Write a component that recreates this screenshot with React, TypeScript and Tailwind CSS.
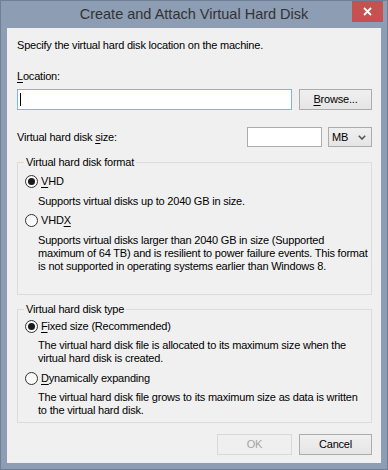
import React from 'react';

const Radio = ({ checked }: { checked: boolean }) => (
  <span className="w-[13px] h-[13px] rounded-full border border-[#333] bg-gradient-to-b from-[#f4f4f4] to-white flex items-center justify-center shrink-0">
    {checked && <span className="w-[7px] h-[7px] rounded-full bg-[#1a1a1a]" />}
  </span>
);

const Btn = ({ children, w, disabled }: { children: React.ReactNode; w: string; disabled?: boolean }) => (
  <div
    className={`${w} h-[21px] flex items-center justify-center border ${
      disabled
        ? 'border-[#d9d9d9] bg-[#efefef] text-[#a3a3a3]'
        : 'border-[#acacac] bg-gradient-to-b from-[#f0f0f0] to-[#e5e5e5] text-black'
    }`}
  >
    {children}
  </div>
);

export default function App() {
  return (
    <div className="w-[388px] h-[470px] bg-[#8d9db3] border border-[#6f7f95] flex flex-col font-['Liberation_Sans',Arial,sans-serif]">
      {/* title bar */}
      <div className="relative h-[27px] shrink-0 flex items-center justify-center text-[14.5px] text-[#333]">
        Create and Attach Virtual Hard Disk
        <div className="absolute top-0 right-[4px] w-[31px] h-[21px] bg-[#c75050] flex items-center justify-center">
          <svg width="9" height="9" viewBox="0 0 9 9">
            <path d="M1 1 L8 8 M8 1 L1 8" stroke="white" strokeWidth="1.8" />
          </svg>
        </div>
      </div>

      {/* client area */}
      <div className="mx-[6px] mb-[6px] flex-1 min-h-0 overflow-hidden bg-[#f0f0f0] pl-[10px] pr-[9px] pt-[11px] flex flex-col text-[11px] leading-[13px] tracking-[-0.2px] text-black">
        <div>Specify the virtual hard disk location on the machine.</div>

        <div className="mt-[18px]">
          <u className="underline-offset-2">L</u>ocation:
        </div>
        <div className="mt-[6px] flex gap-[7px]">
          <div className="w-[275px] h-[21px] bg-white border border-[#7eb4ea] flex items-center pl-[2px]">
            <span className="w-px h-[13px] bg-black" />
          </div>
          <Btn w="w-[73px]">
            <span>
              <u className="underline-offset-2">B</u>rowse...
            </span>
          </Btn>
        </div>

        <div className="mt-[17px] flex items-center h-[20px]">
          <div className="flex-1">
            Virtual hard disk <u className="underline-offset-2">s</u>ize:
          </div>
          <div className="w-[75px] h-[20px] bg-white border border-[#acacac]" />
          <div className="ml-[6px] w-[44px] h-[20px] border border-[#acacac] bg-gradient-to-b from-[#f0f0f0] to-[#e5e5e5] flex items-center pl-[3px] pr-[5px] justify-between">
            <span>MB</span>
            <svg width="8" height="5" viewBox="0 0 8 5">
              <path d="M0.8 0.8 L4 4 L7.2 0.8" fill="none" stroke="#555" strokeWidth="1.6" />
            </svg>
          </div>
        </div>

        {/* format group */}
        <fieldset className="mt-[9px] border border-[#dcdcdc] pl-[7px] pb-[21px]">
          <legend className="ml-[-1px] px-[2px]">Virtual hard disk format</legend>
          <div className="mt-[6px] h-[13px] flex items-center gap-[3px]">
            <Radio checked />
            <span>
              <u className="underline-offset-2">V</u>HD
            </span>
          </div>
          <div className="mt-[7px] ml-[13px]">Supports virtual disks up to 2040 GB in size.</div>
          <div className="mt-[6px] h-[13px] flex items-center gap-[3px]">
            <Radio checked={false} />
            <span>
              VHD<u className="underline-offset-2">X</u>
            </span>
          </div>
          <div className="mt-[7px] ml-[13px] whitespace-nowrap">
            Supports virtual disks larger than 2040 GB in size (Supported
            <br />
            maximum of 64 TB) and is resilient to power failure events. This format
            <br />
            is not supported in operating systems earlier than Windows 8.
          </div>
        </fieldset>

        {/* type group */}
        <fieldset className="mt-[8px] border border-[#dcdcdc] pl-[7px] pb-[5px]">
          <legend className="ml-[-1px] px-[2px]">Virtual hard disk type</legend>
          <div className="mt-[4px] h-[13px] flex items-center gap-[3px]">
            <Radio checked />
            <span>
              <u className="underline-offset-2">F</u>ixed size (Recommended)
            </span>
          </div>
          <div className="mt-[6px] ml-[13px] whitespace-nowrap">
            The virtual hard disk file is allocated to its maximum size when the
            <br />
            virtual hard disk is created.
          </div>
          <div className="mt-[7px] h-[13px] flex items-center gap-[3px]">
            <Radio checked={false} />
            <span>
              <u className="underline-offset-2">D</u>ynamically expanding
            </span>
          </div>
          <div className="mt-[6px] ml-[13px] whitespace-nowrap">
            The virtual hard disk file grows to its maximum size as data is written
            <br />
            to the virtual hard disk.
          </div>
        </fieldset>

        <div className="mt-[11px] flex justify-end gap-[7px]">
          <Btn w="w-[75px]" disabled>
            OK
          </Btn>
          <Btn w="w-[73px]">Cancel</Btn>
        </div>
      </div>
    </div>
  );
}
